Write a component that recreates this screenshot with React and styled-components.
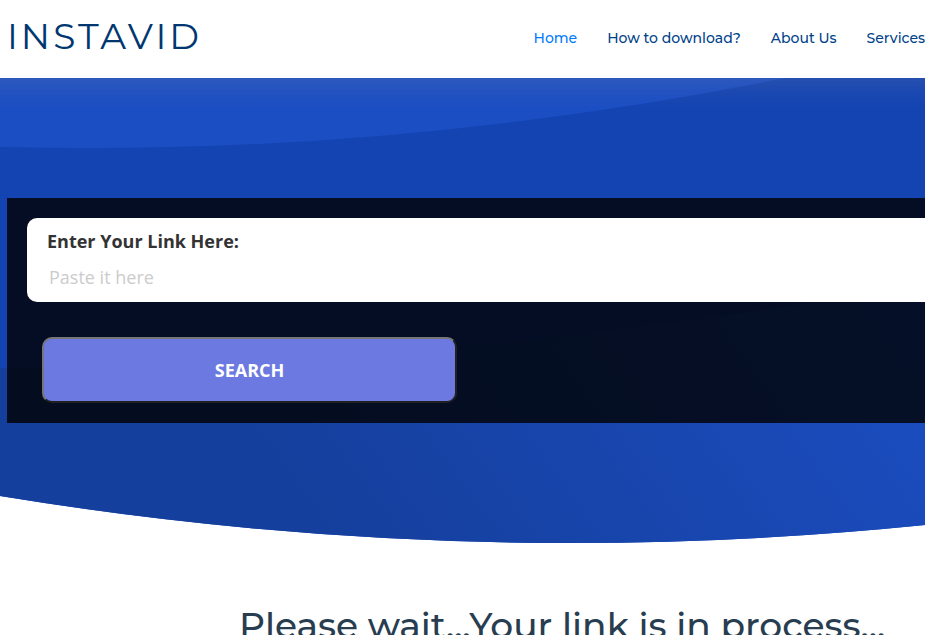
import React from "react";
import styled, { createGlobalStyle } from "styled-components";

const GlobalStyle = createGlobalStyle`
  *, *::before, *::after { box-sizing: border-box; }
  body {
    margin: 0;
    background: #fff;
    font-family: "Open Sans", sans-serif;
    overflow: hidden;
  }
`;

const displayFont = `Montserrat, Inter, sans-serif`;

const Header = styled.header`
  display: flex;
  align-items: flex-start;
  justify-content: space-between;
  height: 78px;
  padding: 14px 0 0 7px;
  background: #fff;
`;

const Logo = styled.a`
  color: #013771;
  font-family: ${displayFont};
  font-size: 36px;
  font-weight: 400;
  letter-spacing: 3px;
  line-height: 44px;
  text-decoration: none;
  text-transform: uppercase;
`;

const Nav = styled.nav`
  display: flex;
  gap: 30px;
  padding-top: 14px;
`;

const NavLink = styled.a`
  color: ${({ $active }) => ($active ? "#007bff" : "#004289")};
  font-family: ${displayFont};
  font-size: 14px;
  font-weight: 500;
  line-height: 20px;
  text-decoration: none;
  white-space: nowrap;
`;

const Hero = styled.section`
  display: grid;
  background: #fff;
`;

const Backdrop = styled.svg`
  grid-area: 1 / 1;
  width: 100%;
  height: 100%;
`;

const HeroContent = styled.div`
  grid-area: 1 / 1;
  padding: 120px 0 120px 7px;
`;

const SearchPanel = styled.form`
  display: flex;
  flex-direction: column;
  gap: 35px;
  padding: 20px 0 20px 20px;
  background: rgba(0, 0, 0, 0.8);
`;

const Field = styled.div`
  display: flex;
  flex-direction: column;
  gap: 8px;
  padding: 10px 20px;
  border-radius: 10px 0 0 10px;
  background: #fff;
`;

const FieldLabel = styled.label`
  color: #333;
  font-size: 18px;
  font-weight: 700;
  line-height: 26px;
`;

const LinkInput = styled.input`
  width: 100%;
  height: 30px;
  padding: 0 2px;
  border: 0;
  outline: 0;
  background: transparent;
  color: #333;
  font-family: inherit;
  font-size: 18px;

  &::placeholder { color: #ccc; }
`;

const SearchButton = styled.button`
  width: 100%;
  max-width: 415px;
  height: 66px;
  margin-left: 15px;
  border: 2px outset #767676;
  border-radius: 10px;
  background: #6c79e0;
  color: #fff;
  font-family: inherit;
  font-size: 18px;
  font-weight: 700;
  text-transform: uppercase;
  cursor: pointer;
`;

const Status = styled.main`
  padding-top: 60px;
  padding-left: 199px;
`;

const StatusHeading = styled.h2`
  margin: 0;
  color: #283d50;
  font-family: ${displayFont};
  font-size: 36px;
  font-weight: 500;
  line-height: 44px;
  text-align: center;
  white-space: nowrap;
`;

const links = ["Home", "How to download?", "About Us", "Services"];

function HeroBackdrop() {
  return (
    <Backdrop viewBox="0 0 925 465" preserveAspectRatio="none" aria-hidden="true">
      <defs>
        <linearGradient id="lower" gradientUnits="userSpaceOnUse" x1="300" y1="440" x2="820" y2="60">
          <stop offset="0" stopColor="#153f9c" />
          <stop offset="1" stopColor="#1c4ec3" />
        </linearGradient>
        <linearGradient id="shade" x1="0" y1="0" x2="0" y2="1">
          <stop offset="0" stopColor="#7f89a1" stopOpacity="0.17" />
          <stop offset="0.5" stopColor="#7f89a1" stopOpacity="0.06" />
          <stop offset="1" stopColor="#7f89a1" stopOpacity="0" />
        </linearGradient>
        <clipPath id="base">
          <path d="M0 0H925V447Q462 494 0 418Z" />
        </clipPath>
      </defs>
      <g clipPath="url(#base)">
        <rect width="925" height="465" fill="#1444b2" />
        <path d="M0 69Q392 79 785 0H0Z" fill="#1c4ec3" />
        <path d="M0 290Q462 290 925 205V465H0Z" fill="url(#lower)" />
        <rect width="925" height="30" fill="url(#shade)" />
      </g>
    </Backdrop>
  );
}

export default function App() {
  return (
    <>
      <GlobalStyle />
      <Header>
        <Logo href="#">Instavid</Logo>
        <Nav>
          {links.map((text, i) => (
            <NavLink key={text} href="#" $active={i === 0}>{text}</NavLink>
          ))}
        </Nav>
      </Header>
      <Hero>
        <HeroBackdrop />
        <HeroContent>
          <SearchPanel onSubmit={(e) => e.preventDefault()}>
            <Field>
              <FieldLabel htmlFor="link">Enter Your Link Here:</FieldLabel>
              <LinkInput id="link" type="text" placeholder="Paste it here" />
            </Field>
            <SearchButton type="submit">Search</SearchButton>
          </SearchPanel>
        </HeroContent>
      </Hero>
      <Status>
        <StatusHeading>Please wait...Your link is in process...</StatusHeading>
      </Status>
    </>
  );
}
